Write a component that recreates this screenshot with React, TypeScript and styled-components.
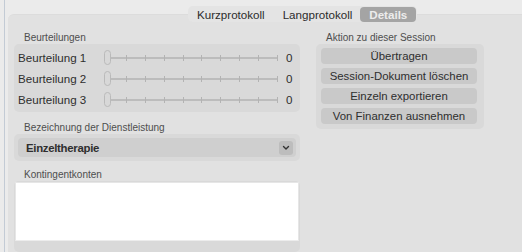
import styled, { createGlobalStyle } from "styled-components";

const GlobalStyle = createGlobalStyle`
  html, body {
    margin: 0;
    padding: 0;
    background: #ebebeb;
    font-family: "Liberation Sans", Arial, sans-serif;
    color: #333;
  }
  #root {
    width: 522px;
    height: 252px;
    overflow: hidden;
  }
`;

const Window = styled.div`
  width: 522px;
  height: 252px;
  display: flex;
  background: #ebebeb;
`;

const Edge = styled.div`
  width: 4px;
  flex: none;
  border-right: 1px solid #c3cbd5;
  margin-right: 3px;
`;

const Main = styled.div`
  flex: 1;
  display: flex;
  flex-direction: column;
  padding-top: 6px;
  min-width: 0;
`;

const TabBar = styled.div`
  position: relative;
  z-index: 1;
  margin-left: 180px;
  margin-bottom: -8px;
  width: 229px;
  height: 16px;
  display: flex;
  align-items: center;
  background: #e4e4e4;
  border-radius: 5px;
  padding: 0 1px;
  box-sizing: border-box;
`;

const Tab = styled.div<{ $active?: boolean }>`
  height: 15px;
  display: flex;
  align-items: center;
  justify-content: center;
  font-size: 11.6px;
  padding: 0 ${(p) => (p.$active ? "9px" : "8px")};
  border-radius: 4px;
  color: ${(p) => (p.$active ? "#ececec" : "#2c2c2c")};
  background: ${(p) => (p.$active ? "#a4a4a4" : "transparent")};
  font-weight: ${(p) => (p.$active ? "bold" : "normal")};
`;

const Divider = styled.span`
  width: 1px;
  height: 10px;
  background: #d2d2d2;
  margin: 0 1px;
`;

const Panel = styled.div`
  flex: 1;
  background: #e1e1e1;
  border-top: 1px solid #dcdcdc;
  border-top-left-radius: 6px;
  display: flex;
  gap: 16px;
  padding: 17px 0 0 6px;
  margin-right: -20px;
`;

const Column = styled.div<{ $width: number }>`
  width: ${(p) => p.$width}px;
  display: flex;
  flex-direction: column;
  flex: none;
`;

const Caption = styled.div<{ $top?: number }>`
  font-size: 10px;
  color: #4e4e4e;
  padding-left: 10px;
  height: 12px;
  line-height: 12px;
  margin-top: ${(p) => p.$top ?? 0}px;
`;

const Group = styled.div<{ $grow?: boolean }>`
  background: #d9d9d9;
  border-radius: 5px;
  padding: 4px;
  display: flex;
  flex-direction: column;
  ${(p) => (p.$grow ? "flex: 1; padding: 1px 1px 0;" : "")}
`;

const SliderGroup = styled(Group)`
  padding: 3px 4px 2px;
`;

const SliderRow = styled.div`
  height: 21px;
  display: flex;
  align-items: center;
`;

const RowLabel = styled.span`
  width: 86px;
  font-size: 11.6px;
  color: #2e2e2e;
`;

const Slider = styled.div`
  position: relative;
  width: 174px;
  height: 15px;
  display: flex;
  align-items: center;
`;

const Track = styled.div`
  flex: 1;
  margin-left: 3px;
  height: 2px;
  background: #bcbcbc;
  display: flex;
  justify-content: space-between;
  align-items: center;
`;

const Tick = styled.span`
  width: 1px;
  height: 6px;
  background: #b3b3b3;
`;

const Thumb = styled.div`
  position: absolute;
  left: 0;
  top: 0;
  width: 5px;
  height: 13px;
  border: 1px solid #bababa;
  border-radius: 4px;
  background: #d8d8d8;
`;

const Value = styled.span`
  margin-left: 8px;
  font-size: 11.6px;
  color: #2e2e2e;
`;

const Popup = styled.div`
  height: 19px;
  border-radius: 4px;
  background: #cfcfcf;
  display: flex;
  align-items: center;
  justify-content: space-between;
  padding: 0 3px 0 8px;
`;

const PopupText = styled.span`
  font-size: 11.4px;
  font-weight: bold;
  color: #2e2e2e;
  letter-spacing: -0.3px;
`;

const Chevron = styled.span`
  width: 14px;
  height: 14px;
  border-radius: 3px;
  background: #bdbdbd;
  display: flex;
  align-items: center;
  justify-content: center;
`;

const ListBox = styled.div`
  height: 57px;
  background: #ffffff;
  border: 1px solid #e6e6e6;
  border-bottom-color: #ececec;
`;

const Buttons = styled.div`
  background: #d9d9d9;
  border-radius: 5px;
  padding: 4px 7px 5px 5px;
  display: flex;
  flex-direction: column;
  gap: 4px;
`;

const Button = styled.div`
  height: 16px;
  border-radius: 4px;
  background: #c9c9c9;
  display: flex;
  align-items: center;
  justify-content: center;
  font-size: 11.4px;
  color: #2e2e2e;
`;

const ratings = ["Beurteilung 1", "Beurteilung 2", "Beurteilung 3"];
const actions = [
  "Übertragen",
  "Session-Dokument löschen",
  "Einzeln exportieren",
  "Von Finanzen ausnehmen",
];

const App = () => {
  return (
    <Window>
      <GlobalStyle />
      <Edge />
      <Main>
        <TabBar>
          <Tab>Kurzprotokoll</Tab>
          <Divider />
          <Tab>Langprotokoll</Tab>
          <Tab $active>Details</Tab>
        </TabBar>
        <Panel>
          <Column $width={286}>
            <Caption>Beurteilungen</Caption>
            <SliderGroup>
              {ratings.map((r) => (
                <SliderRow key={r}>
                  <RowLabel>{r}</RowLabel>
                  <Slider>
                    <Track>
                      {Array.from({ length: 10 }).map((_, i) => (
                        <Tick key={i} />
                      ))}
                    </Track>
                    <Thumb />
                  </Slider>
                  <Value>0</Value>
                </SliderRow>
              ))}
            </SliderGroup>
            <Caption $top={10}>Bezeichnung der Dienstleistung</Caption>
            <Group>
              <Popup>
                <PopupText>Einzeltherapie</PopupText>
                <Chevron>
                  <svg width="8" height="6" viewBox="0 0 8 6">
                    <path
                      d="M1.5 1.5 L4 4 L6.5 1.5"
                      fill="none"
                      stroke="#333"
                      strokeWidth="1.4"
                      strokeLinecap="round"
                      strokeLinejoin="round"
                    />
                  </svg>
                </Chevron>
              </Popup>
            </Group>
            <Caption $top={8}>Kontingentkonten</Caption>
            <Group $grow>
              <ListBox />
            </Group>
          </Column>
          <Column $width={168}>
            <Caption>Aktion zu dieser Session</Caption>
            <Buttons>
              {actions.map((a) => (
                <Button key={a}>{a}</Button>
              ))}
            </Buttons>
          </Column>
        </Panel>
      </Main>
    </Window>
  );
};

export default App;
